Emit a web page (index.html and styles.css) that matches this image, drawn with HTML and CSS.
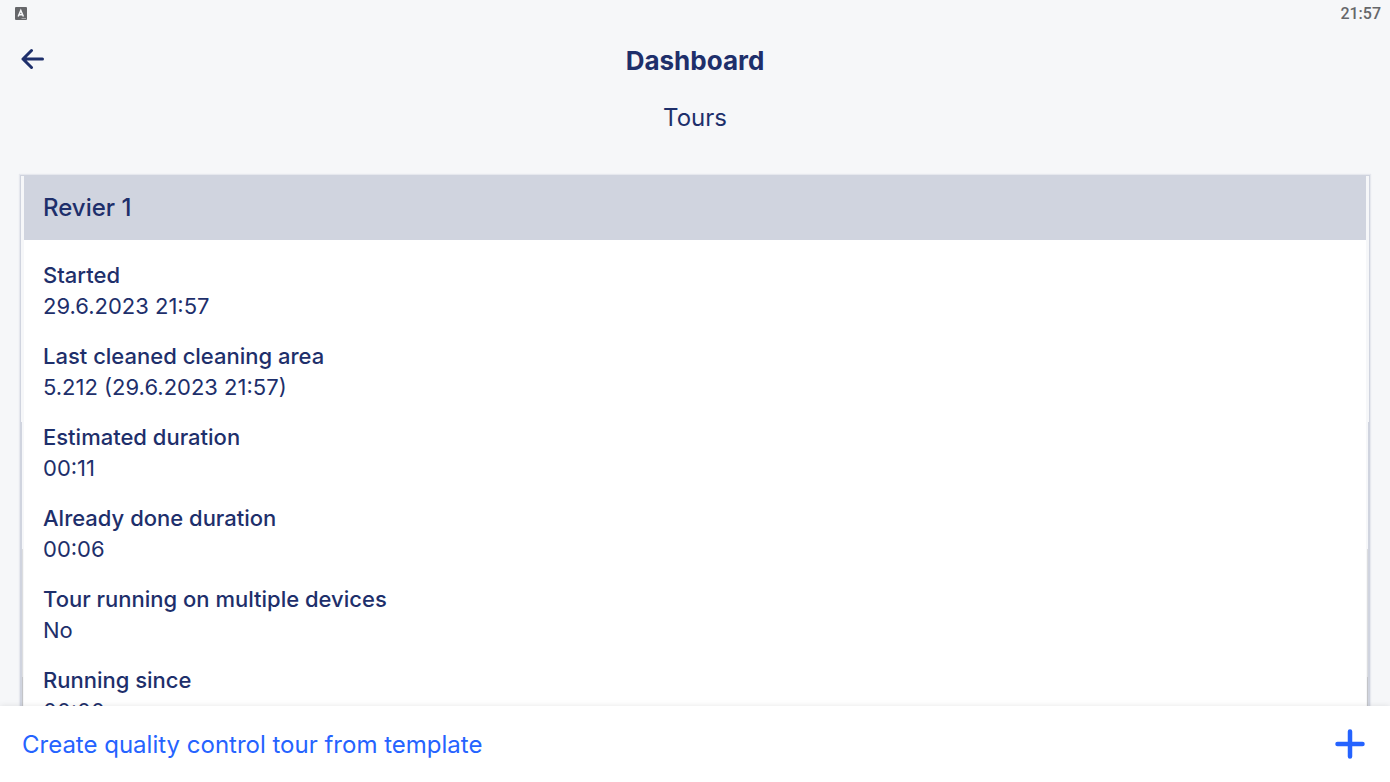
FILE: index.html
```html
<!DOCTYPE html>
<html lang="en">
<head>
    <meta charset="UTF-8">
    <meta name="viewport" content="width=device-width, initial-scale=1.0">
    <title>Dashboard</title>
    <link rel="stylesheet" href="styles.css">
</head>
<body>
    <div class="status-bar">
        <svg class="status-icon" viewBox="0 0 12 13" aria-hidden="true">
            <rect width="12" height="13" rx="1" fill="#66676a"/>
            <path d="M3.200 9.500 L5.800 3.500 L8.400 9.500 M4.200 7.700 H7.400" fill="none" stroke="#f6f7f9" stroke-width="1.500"/>
            <path d="M6.500 11.500 H11" stroke="#a5a6a9" stroke-width="1"/>
        </svg>
        <span>21:57</span>
    </div>

    <header class="header">
        <button type="button" class="back" aria-label="Back">
            <svg viewBox="0 0 24 24" width="24" height="24">
                <path d="M21.500 12 H2 M10.500 3.500 L2 12 L10.500 20.500" fill="none" stroke="currentColor" stroke-width="3" stroke-linecap="round" stroke-linejoin="round"/>
            </svg>
        </button>
        <h1>Dashboard</h1>
    </header>

    <main class="content">
        <h2>Tours</h2>
        <section class="card">
            <h3>Revier 1</h3>
            <dl class="details">
                <div><dt>Started</dt><dd>29.6.2023 21:57</dd></div>
                <div><dt>Last cleaned cleaning area</dt><dd>5.212 (29.6.2023 21:57)</dd></div>
                <div><dt>Estimated duration</dt><dd>00:11</dd></div>
                <div><dt>Already done duration</dt><dd>00:06</dd></div>
                <div><dt>Tour running on multiple devices</dt><dd>No</dd></div>
                <div><dt>Running since</dt><dd>00:00</dd></div>
            </dl>
        </section>
    </main>

    <button type="button" class="create">
        <span>Create quality control tour from template</span>
        <svg viewBox="0 0 30 30" width="30" height="30" aria-hidden="true">
            <path d="M15 2.500 V27.500 M2.500 15 H27.500" stroke="currentColor" stroke-width="4.500" stroke-linecap="round"/>
        </svg>
    </button>
</body>
</html>
```
FILE: styles.css
```css
* {
    box-sizing: border-box;
}

body {
    margin: 0;
    height: 100vh;
    display: flex;
    flex-direction: column;
    font-family: Inter, sans-serif;
    background: #f6f7f9;
    color: #1e2f6b;
}

button {
    font: inherit;
    border: none;
    cursor: pointer;
}

.status-bar {
    display: flex;
    align-items: center;
    justify-content: space-between;
    height: 27px;
    padding: 0 9px 0 15px;
    font-family: Roboto, sans-serif;
    font-size: 16px;
    font-weight: 500;
    color: #66676a;
}

.status-icon {
    width: 12px;
    height: 13px;
}

.header {
    display: grid;
    grid-template-columns: 24px 1fr 24px;
    align-items: center;
    height: 64px;
    padding: 0 21px;
}

.back {
    display: flex;
    padding: 0;
    background: none;
    color: #1e2f6b;
}

h1 {
    margin: 0;
    padding-top: 2px;
    text-align: center;
    font-size: 26px;
    font-weight: 700;
}

.content {
    flex: 1;
    min-height: 0;
    padding: 10px 20px 0;
    overflow-y: auto;
    scrollbar-width: none;
}

h2 {
    margin: 0 0 40px;
    text-align: center;
    font-size: 24px;
    font-weight: 400;
    line-height: 34px;
}

/* the side edges get darker towards the bottom of the card */
.card {
    padding: 0 3px;
    background:
        linear-gradient(#f6f7f9 246px, #d0d4df 246px) left / 1px 100% no-repeat,
        linear-gradient(#f6f7f9 246px, #d0d4df 246px) right / 1px 100% no-repeat,
        linear-gradient(#f6f7f9 373px, #dcdddf 373px, #dcdddf 501px, #c4c5c8 501px) 1px 0 / 1px 100% no-repeat,
        linear-gradient(#f6f7f9 373px, #dcdddf 373px, #dcdddf 501px, #c4c5c8 501px) right 1px top / 1px 100% no-repeat,
        linear-gradient(#f6f7f9, #f6f7f9) 2px 0 / 1px 100% no-repeat,
        linear-gradient(#f6f7f9, #f6f7f9) right 2px top / 1px 100% no-repeat,
        #fff;
    border: 1px solid #d0d4df;
    box-shadow: 0 0 1px 1px #e6e8ee;
}

h3 {
    margin: 0;
    padding: 0 19px;
    font-size: 24px;
    font-weight: 500;
    line-height: 64px;
    background: #d0d4df;
}

.details {
    display: flex;
    flex-direction: column;
    gap: 19px;
    margin: 0;
    padding: 20px 19px;
    font-size: 22px;
    line-height: 31px;
}

dt {
    font-weight: 500;
}

dd {
    margin: 0;
}

.create {
    position: relative;
    display: flex;
    align-items: center;
    justify-content: space-between;
    height: 76px;
    padding: 0 25px 0 22px;
    font-size: 24px;
    color: #2563ff;
    background: #fff;
    box-shadow: 0 0 6px rgba(0, 0, 0, 0.1);
}
```
